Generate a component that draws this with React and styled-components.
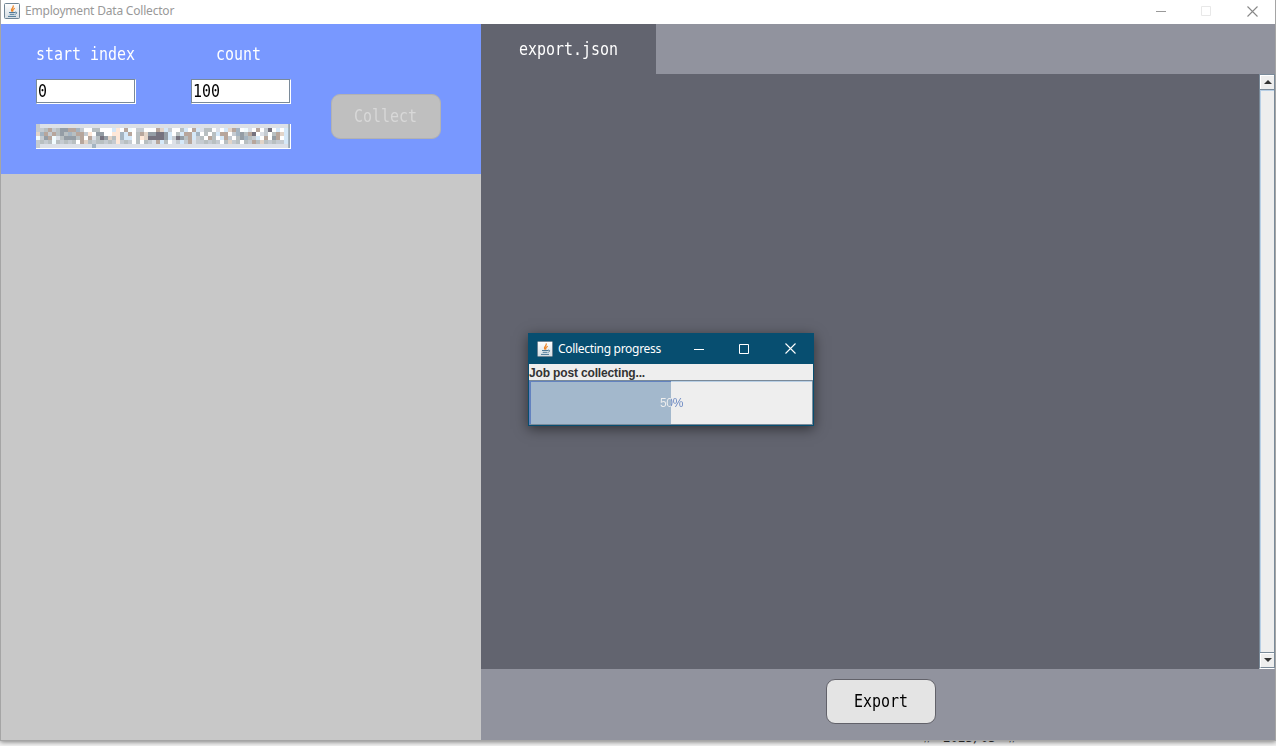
import React from 'react';
import styled, { createGlobalStyle } from 'styled-components';

const Global = createGlobalStyle`
  * { box-sizing: border-box; }
  body { margin: 0; overflow: hidden; background: #f2f2f2; font-family: "Noto Sans", "Noto Sans CJK KR", sans-serif; }
`;
const Desktop = styled.div`
  position: relative; width: 1276px; height: 746px; overflow: hidden;
  display: flex; flex-direction: column; background: #f4f4f4;
`;
const Window = styled.main`
  height: 741px; flex: none; display: flex; flex-direction: column; z-index: 1;
  border: solid #a5a5a5; border-width: 0 1px 1px; box-shadow: 0 1px 5px rgba(0,0,0,.5);
`;
const TitleBar = styled.header`
  height: 24px; flex: none; display: flex; align-items: center; background: #fff; color: #999;
  padding: 0 17px 2px 3px; font-size: 12px;
`;
const Title = styled.span`
  flex: 1; margin-left: 5px; line-height: 18px; white-space: nowrap; letter-spacing: ${p => p.$spacing || '0'};
`;
const Controls = styled.div`
  display: flex; align-items: center; gap: 35px;
  svg:last-child { margin-left: 1px; }
`;
const Body = styled.div`flex: 1; display: flex; min-height: 0;`;
const Sidebar = styled.section`width: 480px; background: #c8c8c8;`;
const Form = styled.div`height: 150px; background: #7898ff; padding: 18px 0 0 35px; display: flex;`;
const Fields = styled.div`width: 255px;`;
const FieldRow = styled.div`display: flex; justify-content: space-between;`;
const Field = styled.label`width: 100px; display: flex; flex-direction: column;`;
const Caption = styled.span`padding-left: ${p => p.$indent}px; height: 24px;`;
const Mono = styled.span`
  display: inline-block; font: 17px/24px "DejaVu Sans Mono", monospace;
  width: ${p => p.$chars * 9}px; white-space: pre; color: ${p => p.$color};
  transform: scaleX(.8795); transform-origin: 0 50%;
`;
const Input = styled.span`
  width: 100px; height: 25px; margin-top: 13px; background: #fff; padding-left: 1px;
  border: 1px solid #7a8a99; border-right-color: #fff; border-bottom-color: #fff;
  box-shadow: inset -1px -1px #7a8a99; line-height: 22px;
  ${Mono} { line-height: 22px; }
`;
const Key = styled.svg`display: block; margin-top: 20px;`;
const Button = styled.button`
  width: 110px; height: 45px; border-radius: 9px; border: 1px solid ${p => p.$border};
  background: ${p => p.$bg}; padding: 0 ${p => p.$shift || 0}px 2px 0; margin: ${p => p.$margin};
`;
const Editor = styled.section`flex: 1; display: flex; flex-direction: column; background: #62646f;`;
const Tabs = styled.div`height: 50px; background: #91939e;`;
const Tab = styled.div`width: 175px; height: 50px; background: #62646f; padding: 13px 0 0 38px;`;
const Content = styled.div`flex: 1; display: flex; justify-content: flex-end;`;
const Scroll = styled.div`
  width: 16px; display: flex; flex-direction: column; background: #eee;
  border: solid #7a8a99; border-width: 1px 1px 0 1px; border-bottom: 1px solid #fff;
`;
const Arrow = styled.div`
  height: 14px; flex: none; display: flex; align-items: center; justify-content: center;
  border: 1px solid #fff; border-width: 1px 0 0 1px; padding-bottom: 2px;
`;
const LowerArrow = styled(Arrow)`height: 15px; border-bottom: 1px solid #7a8a99;`;
const Track = styled.div`flex: 1; border: 1px solid #7a8a99; border-width: 1px 0; box-shadow: inset 1px 1px #b8cfe5;`;
const Footer = styled.footer`height: 71px; background: #91939e; padding: 10px 0 0 345px;`;
const Behind = styled.div`
  position: absolute; left: 922px; top: 729px; z-index: 0; display: flex; color: #333; white-space: pre;
`;
const Month = styled.span`margin: 0 10px 0 9px; width: 54px; font: 12.5px/17px "DejaVu Sans Mono", monospace;`;
const Ditto = styled.span`width: 12px; padding-top: 2px; font: 11px/17px "Noto Sans CJK KR", sans-serif;`;
const Dialog = styled.section`
  position: absolute; left: 528px; top: 333px; z-index: 2; width: 286px; height: 93px;
  border: 1px solid #074e70; background: #eee; box-shadow: 0 3px 12px rgba(0,0,0,.5);
`;
const DialogBar = styled.div`
  height: 30px; background: #074e70; color: #fff; display: flex; align-items: center;
  padding: 0 17px 1px 8px; font-size: 12px;
`;
const Status = styled.div`
  height: 16px; font: bold 12px/18px "Liberation Sans", sans-serif; color: #333; letter-spacing: -.15px;
`;
const Progress = styled.div`
  height: 45px; display: flex; border: 1px solid #7a8a99; border-left-color: #6382bf;
  box-shadow: inset 1px 1px #b8cfe5; font: 12px/45px "Liberation Sans", sans-serif; letter-spacing: -.3px;
`;
const Fill = styled.div`
  height: 43px; background: #a3b8cc; border-left: 1px solid #6382bf; border-top: 1px solid #6382bf;
`;
const Percent = styled.span`
  height: 43px; margin-left: -11px; color: transparent; background-clip: text;
  background-image: linear-gradient(90deg, #eee 11px, #6382bf 11px);
`;

const Java = () => (
  <svg width="16" height="16" viewBox="0 0 16 16">
    <defs><linearGradient id="tile" x2="0" y2="1"><stop stopColor="#fff" /><stop offset="1" stopColor="#d5dde3" /></linearGradient></defs>
    <rect x=".5" y=".5" width="15" height="15" rx="1" fill="url(#tile)" stroke="#6f8494" />
    <path d="M8.2 8.5C5.5 6.1 10.3 5.2 9.2 2.4M9.2 8.5C8 7.2 9.2 6.2 10.7 5.2" fill="none" stroke="#ee8425" strokeWidth="1.2" />
    <path d="M5 9.5h6M5.7 11.3h4.8M4 13.4h8M11 9.2c2-.6 2.3 1.3.3 2.1" fill="none" stroke="#4d7896" />
  </svg>
);
const Minimize = ({ color }) => <svg width="10" height="10"><path d="M0 5.5h10" stroke={color} /></svg>;
const Maximize = ({ color }) => <svg width="10" height="10"><path d="M.5.5h9v9h-9z" fill="none" stroke={color} /></svg>;
const Close = ({ color }) => <svg width="11" height="11"><path d="M.5.5l10 10M10.5.5l-10 10" stroke={color} strokeWidth="1.1" /></svg>;

const palette = {
  w: '#ffffff', l: '#dce0e7', g: '#b8bfc1', s: '#c5cbd1', d: '#949da5', k: '#75727e',
  b: '#b7a69c', t: '#e2d4c8', u: '#d5e8f8', c: '#f1fcff', a: '#a4b4c1', e: '#ffe8d8',
};
const blocks = [
  'slllllllllllllllllllllllllllllllllllllllllllllllllllllllllllllla',
  'ssgbsgddbbaswwggwwwuewbcwsswwwbtuswwguwbulggwlwutbawclwbwskwuwua',
  'tabsbgdgagbbsewddwweeaubwgbtddkkduwgubbuawgwgubbwsadgbkwlswgbtua',
  'csdbclgdddgbwblgkdtgeauuwgetkkkkduskdgbusgwbgwubswgdagsuwbwdbwua',
  'sgsgcgsgsgwbtgsggsgsesgswgwgslbugwlsusblssgsgswgtsgwgsbgtgsgssua',
  'slllllllllllllalllllllllllllllllllllllllllllllllllllllllllllllla',
];
const MaskedKey = () => (
  <Key width="255" height="25" shapeRendering="crispEdges">
    <rect width="255" height="25" fill="#dce0e7" />
    {blocks.map((row, y) => [...row].map((c, x) => <rect key={`${x}-${y}`} x={x * 4} y={y * 4} width="4" height="4" fill={palette[c]} />))}
    <path d="M0 24.5h255M254.5 0v25" stroke="#fff" />
    <path d="M253.5 0v24" stroke="#9ba8b2" />
  </Key>
);

export default function App() {
  return (
    <Desktop>
      <Global />
      <Behind><Ditto>〃</Ditto><Month>2023/03</Month><Ditto>〃</Ditto></Behind>
      <Window>
        <TitleBar>
          <Java /><Title $spacing="-.2px">Employment Data Collector</Title>
          <Controls><Minimize color="#999" /><Maximize color="#e8e8e8" /><Close color="#888" /></Controls>
        </TitleBar>
        <Body>
          <Sidebar>
            <Form>
              <Fields>
                <FieldRow>
                  <Field><Caption $indent={0}><Mono $chars={11} $color="#fff">start index</Mono></Caption><Input><Mono $chars={1} $color="#000">0</Mono></Input></Field>
                  <Field><Caption $indent={25}><Mono $chars={5} $color="#fff">count</Mono></Caption><Input><Mono $chars={3} $color="#000">100</Mono></Input></Field>
                </FieldRow>
                <MaskedKey />
              </Fields>
              <Button $bg="#bfbfbf" $border="#b2b2b2" $margin="52px 0 0 40px" $shift={2}><Mono $chars={7} $color="#d8d8d8">Collect</Mono></Button>
            </Form>
          </Sidebar>
          <Editor>
            <Tabs><Tab><Mono $chars={11} $color="#fff">export.json</Mono></Tab></Tabs>
            <Content>
              <Scroll>
                <Arrow><svg width="8" height="4"><path d="M0 4L4 0l4 4z" fill="#333" /></svg></Arrow>
                <Track />
                <LowerArrow><svg width="8" height="4"><path d="M0 0h8L4 4z" fill="#333" /></svg></LowerArrow>
              </Scroll>
            </Content>
            <Footer><Button $bg="#e4e4e4" $border="#62626a" $margin="0"><Mono $chars={6} $color="#000">Export</Mono></Button></Footer>
          </Editor>
        </Body>
      </Window>
      <Dialog>
        <DialogBar>
          <Java /><Title $spacing="-.3px">Collecting progress</Title>
          <Controls><Minimize color="#fff" /><Maximize color="#fff" /><Close color="#fff" /></Controls>
        </DialogBar>
        <Status>Job post collecting...</Status>
        <Progress><Fill style={{ width: '50%' }} /><Percent>50%</Percent></Progress>
      </Dialog>
    </Desktop>
  );
}
